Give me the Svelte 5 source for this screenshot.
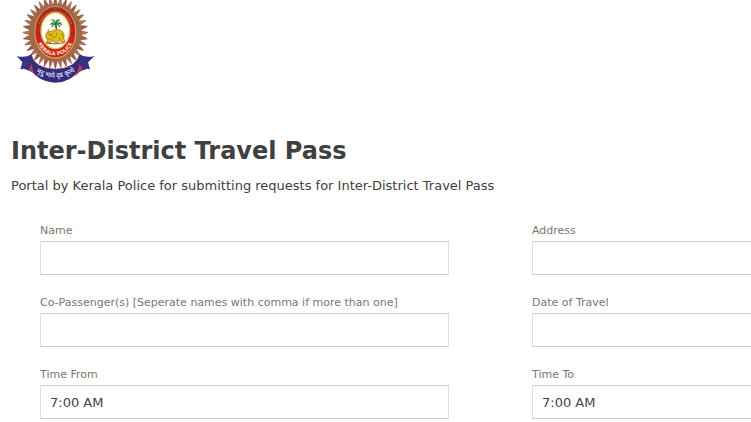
<script lang="ts">
  // ── Form fields, in reading order (two per row) ──────────
  const fields = [
    { id: 'name', label: 'Name', value: '' },
    { id: 'address', label: 'Address', value: '' },
    { id: 'co-passengers', label: 'Co-Passenger(s) [Seperate names with comma if more than one]', value: '' },
    { id: 'travel-date', label: 'Date of Travel', value: '' },
    { id: 'time-from', label: 'Time From', value: '7:00 AM' },
    { id: 'time-to', label: 'Time To', value: '7:00 AM' },
  ];

  // ── Sunburst behind the crest ────────────────────────────
  const RAYS = 36;

  function point(angle: number, scale: number) {
    const x = 133 + Math.cos(angle) * 98 * scale;
    const y = 98 + Math.sin(angle) * 108 * scale;
    return `${x.toFixed(1)},${y.toFixed(1)}`;
  }

  // Each ray tapers from the disc to a narrow tip
  const rays = Array.from({ length: RAYS }, (_, i) => {
    const a = (i / RAYS) * Math.PI * 2 - Math.PI / 2;
    return [
      point(a - 0.09, 0.78),
      point(a - 0.045, 0.9),
      point(a - 0.012, 1),
      point(a + 0.012, 1),
      point(a + 0.045, 0.9),
      point(a + 0.09, 0.78),
    ].join(' ');
  });
</script>

<main class="page">
  <header class="header">
    <svg class="crest" viewBox="0 0 270 255" role="img" aria-label="Kerala Police">
      <!-- Sunburst -->
      {#each rays as ray, i}
        <polygon points={ray} fill={i % 2 ? '#a8745a' : '#985c48'} />
      {/each}
      <ellipse cx="133" cy="98" rx="79" ry="87" fill="#a0694a" />
      <ellipse cx="133" cy="97" rx="63" ry="79" fill="#d9a850" />

      <!-- Red ring -->
      <ellipse cx="133" cy="96" rx="60" ry="76" fill="#cb2422" />
      <path d="M80 82C84 52 104 29 133 29s49 23 53 53" fill="none" stroke="#7a3326" stroke-width="5" />
      <path d="M84 72c8-22 22-36 49-37 27 1 41 15 49 37" fill="none" stroke="#dc8540" stroke-width="2" />
      <circle cx="133" cy="26" r="4" fill="#3f7a38" />
      <circle cx="82" cy="100" r="4" fill="#a52223" />
      <circle cx="184" cy="100" r="4" fill="#a52223" />
      <ellipse cx="133" cy="92" rx="45" ry="56" fill="#e2bd55" />
      <ellipse cx="133" cy="92" rx="41" ry="52" fill="#fffdf0" />

      <!-- Palm tree -->
      <path d="M134 70q4 14 2 29" fill="none" stroke="#825f2b" stroke-width="4" />
      <path
        d="M135 71q-12-9-17 3 9-6 17-3-12 0-13 10 5-8 13-10-4 5-2 13 5-7 2-13 9 2 11 11 3-9-11-11 10-4 17 4-2-14-17-4 3-9 11-11-10-4-12 8-3-12-12-8 9 1 13 11z"
        fill="#26793b"
        stroke="#26793b"
        stroke-width="2"
      />

      <!-- Elephant -->
      <path
        d="M105 103c1-7 9-11 18-9 7-6 19-7 27-2 9 5 11 13 8 22l4 12h-11l-5-8-5 9h-12l-3-6-7 7h-13l4-9c-5-2-7-8-5-16z"
        fill="#dfbd18"
        stroke="#8a6c1a"
        stroke-width="2"
      />
      <path
        d="M112 102q-3-12 2-15M124 97q-5 12 5 15 10-2 7-14M109 116q7 4 16-1M144 112q4 5 1 10M151 99q7 5 5 15"
        fill="none"
        stroke="#8a6c1a"
        stroke-width="2"
      />
      <path d="M104 129q30 6 57-1" fill="none" stroke="#b8422a" stroke-width="3" />
      <circle cx="117" cy="105" r="2" fill="#443317" />

      <!-- Ring lettering -->
      <path id="ring-text" d="M77 112C88 184 178 184 189 112" fill="none" />
      <text class="ring-text">
        <textPath href="#ring-text" startOffset="50%" text-anchor="middle">KERALA POLICE</textPath>
      </text>

      <!-- Ribbon tails -->
      <path d="M17 168q24 7 45-5l14 59q-17-9-38-16-4 1-10 2l6-21z" fill="#3b3181" />
      <path d="M251 168q-24 7-46-5l-14 59q17-9 38-16 4 1 8 2l-6-21z" fill="#3b3181" />
      <path d="M54 208l8-16 15 38z" fill="#c13d52" />
      <path d="M214 208l-8-16-15 38z" fill="#c13d52" />

      <!-- Ribbon front -->
      <path d="M58 162q14 43 74 45 62-2 76-46l-7 51q-18 33-68 36-50-3-67-35z" fill="#332b7c" />
      <path d="M59 163q14 43 73 45 61-2 75-46" fill="none" stroke="#93415c" stroke-width="2" />
      <path id="motto" d="M66 209Q133 258 202 207" fill="none" />
      <text class="motto">
        <textPath href="#motto" startOffset="50%" text-anchor="middle">मृदु भावे दृढ कृत्ये</textPath>
      </text>
    </svg>
    <h1>Inter-District Travel Pass</h1>
    <p>Portal by Kerala Police for submitting requests for Inter-District Travel Pass</p>
  </header>

  <form class="form">
    {#each fields as field}
      <div class="field">
        <label for={field.id}>{field.label}</label>
        <input id={field.id} name={field.id} type="text" bind:value={field.value} />
      </div>
    {/each}
  </form>
</main>

<style>
  :global(body) {
    margin: 0;
    background: #fff;
  }

  /* ── Page ────────────────────────────────────────────────── */
  /* The form keeps two columns, narrow windows scroll sideways */
  .page {
    overflow-x: auto;
    scrollbar-width: none;
    font-family: Verdana, 'DejaVu Sans', sans-serif;
    color: #404040;
  }

  .header {
    padding: 0 11px;
  }

  .crest {
    display: block;
    width: 90px;
    height: 85px;
  }

  .ring-text {
    font-size: 15px;
    font-weight: 700;
    fill: #ffe9c9;
  }

  .motto {
    font-family: 'Noto Sans Devanagari', 'Noto Sans', sans-serif;
    font-size: 20px;
    font-weight: 400;
    fill: #fff;
  }

  h1 {
    margin: 48px 0 0;
    font-size: 24px;
    line-height: 36px;
    font-weight: 700;
  }

  p {
    margin: 8px 0 0;
    font-size: 13px;
    line-height: 18px;
  }

  /* ── Form ────────────────────────────────────────────────── */
  .form {
    display: grid;
    grid-template-columns: 1fr 1fr;
    gap: 18px 83px;
    min-width: 901px;
    padding: 26px 40px 0;
  }

  .field {
    display: flex;
    flex-direction: column;
  }

  label {
    font-size: 11px;
    line-height: 20px;
    color: #777;
  }

  input {
    box-sizing: border-box;
    width: 100%;
    height: 34px;
    padding: 0 9px;
    border: 1px solid #ccc;
    border-left-color: #ddd;
    border-right-color: #ddd;
    border-radius: 0;
    background: #fff;
    font-family: inherit;
    font-size: 13px;
    color: #444;
  }
</style>
